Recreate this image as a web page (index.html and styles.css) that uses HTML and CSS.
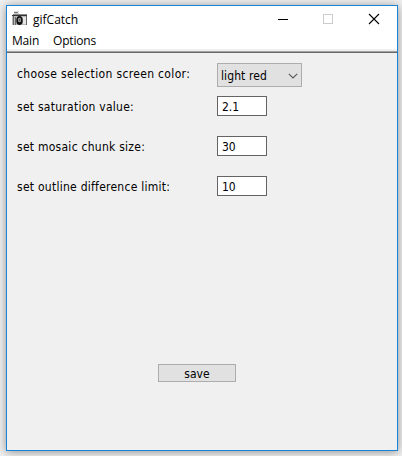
FILE: index.html
```html
<!DOCTYPE html>
<html lang="en">
<head>
<meta charset="utf-8">
<title>gifCatch</title>
<link rel="stylesheet" href="styles.css">
</head>
<body>
<main class="window">
  <header class="titlebar">
    <svg class="logo" width="16" height="16" viewBox="0 0 16 16" shape-rendering="crispEdges">
      <path fill="#ddd" d="M2 0h5v1H2z"/>
      <path fill="#777" d="M2 1h4v1H2z"/>
      <path fill="#ccc" d="M2 2h5v1H2z"/>
      <path fill="#888" d="M1 3h14v1H1z"/>
      <path fill="#333" d="M0 4h15v1H0z"/>
      <path fill="#bbb" d="M0 5h15v9H0z"/>
      <path fill="#666" d="M1 5h1v9H1zM3 6h1v8H3zM14 5h1v9h-1z"/>
      <path fill="#e4e4e4" d="M11 6h3v7h-3z"/>
      <g shape-rendering="auto"><ellipse cx="7.500" cy="9.500" rx="3.200" ry="4.500" fill="#111"/><ellipse cx="7.500" cy="9" rx="1.600" ry="2.300" fill="#aaa"/><circle cx="7.500" cy="9" r=".8" fill="#222"/></g>
    </svg>
    <h1 class="title">gifCatch</h1>
    <div class="controls">
      <svg width="104" height="12" viewBox="0 0 104 12" fill="none">
        <path d="M0 6.500h10" stroke="#000"/>
        <rect x="45.500" y="1.500" width="9" height="9" stroke="#ccc"/>
        <path d="M91 1l10 10M101 1L91 11" stroke="#000" stroke-width="1.1"/>
      </svg>
    </div>
  </header>
  <nav class="menu"><span class="menu-main">Main</span><span class="menu-options">Options</span></nav>
  <form class="settings">
    <div class="row row-select"><span class="label label-color">choose selection screen color:</span>
      <div class="select"><span class="select-text">light red</span>
        <svg width="10" height="6" viewBox="0 0 10 6"><path d="M.8.8L5 5 9.200.8" fill="none" stroke="#555" stroke-width="1.100"/></svg>
      </div>
    </div>
    <div class="row"><span class="label">set saturation value:</span><div class="field">2.1</div></div>
    <div class="row"><span class="label">set mosaic chunk size:</span><div class="field">30</div></div>
    <div class="row"><span class="label">set outline difference limit:</span><div class="field">10</div></div>
    <div class="save">save</div>
  </form>
</main>
</body>
</html>
```
FILE: styles.css
```css
* { box-sizing: border-box; }
body {
  margin: 0;
  height: 456px;
  padding: 5px 4px 5px 6px;
  overflow: hidden;
  background: #f0f0f0;
  color: #000;
  font: 12px/16px "DejaVu Sans Condensed", "DejaVu Sans", sans-serif;
}
.window {
  height: 446px;
  display: flex;
  flex-direction: column;
  border: 1px solid #1883d7;
  background: #f0f0f0;
  box-shadow: 0 1px 9px rgba(0, 0, 0, .4);
}
.titlebar {
  height: 26px;
  display: flex;
  align-items: center;
  padding-left: 5px;
  background: #fff;
}
.title {
  margin: 1px 0 0 5px;
  font: 12px/16px "Open Sans", sans-serif;
}
.controls { margin: 0 15px 0 auto; display: flex; }
.menu {
  height: 19px;
  flex: none;
  display: flex;
  gap: 14px;
  padding: 1px 0 0 5px;
  background: #fff;
  border-bottom: 2px solid #f0f0f0;
  font: 12px/16px "Open Sans", sans-serif;
  letter-spacing: -.2px;
}
.settings {
  flex: 1;
  display: flex;
  flex-direction: column;
  gap: 20px;
  padding: 11px 0 0 10px;
  border-top: 1px solid #a0a0a0;
  box-shadow: inset 0 1px #696969;
}
.row { display: flex; align-items: center; height: 20px; }
.row-select { height: 24px; margin-bottom: -11px; }
.label {
  width: 200px;
  padding-top: 2px;
  white-space: nowrap;
  letter-spacing: .26px;
}
.label-color { padding-top: 0; margin-top: -2px; letter-spacing: .34px; }
.select {
  width: 85px;
  height: 24px;
  display: flex;
  align-items: center;
  justify-content: space-between;
  padding: 2px 3px 0;
  border: 1px solid #adadad;
  background: #e1e1e1;
  letter-spacing: .1px;
}
.field {
  width: 50px;
  height: 20px;
  padding: 2px 4px;
  border: 1px solid #646464;
  background: #fff;
}
.save {
  width: 78px;
  height: 18px;
  margin: 148px 0 0 141px;
  padding-top: 1px;
  border: 1px solid #adadad;
  background: #e1e1e1;
  line-height: 16px;
  text-align: center;
}
```
